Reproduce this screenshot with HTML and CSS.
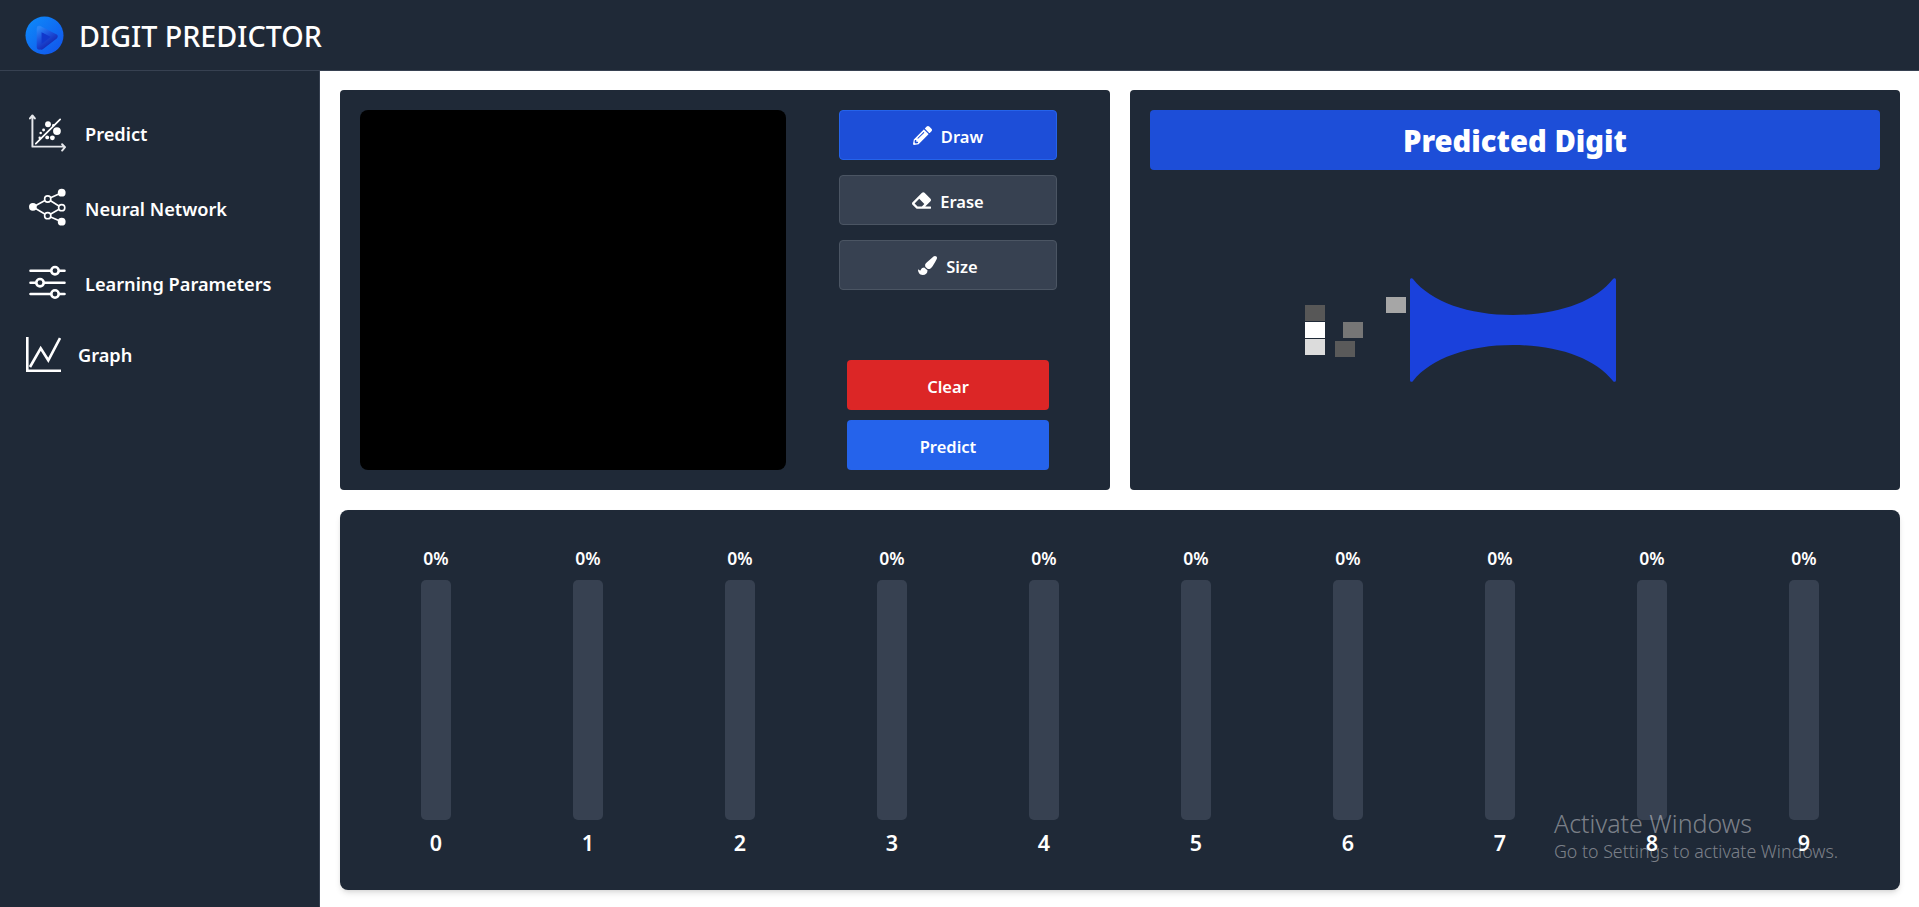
FILE: index.html
```html
<!DOCTYPE html>
<html lang="en">
<head>
<meta charset="utf-8">
<title>Digit Predictor</title>
<link rel="stylesheet" href="styles.css">
</head>
<body>
<header class="topbar">
  <svg class="logo" viewBox="0 0 40 40" aria-hidden="true">
    <defs>
      <linearGradient id="lg1" x1="0" y1="0" x2="1" y2="1"><stop offset="0" stop-color="#0d8dfb"/><stop offset="1" stop-color="#1251ea"/></linearGradient>
      <linearGradient id="lg2" x1="0" y1="0" x2="0.600" y2="1"><stop offset="0" stop-color="#2a86f8"/><stop offset="0.500" stop-color="#1c50dc"/><stop offset="1" stop-color="#1426b0"/></linearGradient>
    </defs>
    <circle cx="20" cy="20" r="19.500" fill="url(#lg1)"/>
    <path d="M14 15L17 31L29 21.500Z" fill="#1138cc"/>
    <path d="M14.500 32V12.500L31 21L17 32" fill="none" stroke="url(#lg2)" stroke-width="5" stroke-linejoin="round" stroke-linecap="round"/>
  </svg>
  <h1 class="brand">DIGIT PREDICTOR</h1>
</header>
<div class="shell">
  <nav class="sidebar">
    <a class="nav-item">
      <svg class="nav-icon" viewBox="0 0 38 40" fill="none" stroke="#e5e7eb" stroke-width="2" stroke-linecap="round" stroke-linejoin="round" aria-hidden="true">
        <path d="M3.500 34V4M1 5L3.500 2L6 5M3.500 34H36M34 31.500L37 34.500L34 38"/>
        <path d="M7 31L32 6" stroke="#fff" stroke-width="1.800"/>
        <g fill="#fff" stroke="none">
          <circle cx="28.700" cy="18" r="4"/><circle cx="19.500" cy="11" r="3"/><circle cx="24" cy="25" r="2.500"/><circle cx="18.700" cy="24.500" r="2"/><circle cx="12" cy="20" r="1.300"/><circle cx="15" cy="17" r="1.500"/><circle cx="11" cy="25" r="1.300"/><circle cx="25" cy="12" r="1.300"/>
        </g>
      </svg>
      <span>Predict</span>
    </a>
    <a class="nav-item">
      <svg class="nav-icon" viewBox="0 0 37 40" fill="none" stroke="#fff" stroke-width="1.600" aria-hidden="true">
        <path d="M4 19L18.700 11L32.700 4.700M4 19L18.700 27.700L32.700 33.700M18.700 11L32.700 19.700L18.700 27.700"/>
        <circle cx="3.900" cy="18.800" r="3.900" fill="#fff" stroke="none"/>
        <circle cx="32.700" cy="4.700" r="3.900" fill="#fff" stroke="none"/>
        <circle cx="32.700" cy="33.700" r="3.900" fill="#fff" stroke="none"/>
        <circle cx="18.700" cy="11" r="3.100" fill="#1f2937"/>
        <circle cx="18.700" cy="27.700" r="3.100" fill="#1f2937"/>
        <circle cx="32.700" cy="19.700" r="3.100" fill="#1f2937"/>
      </svg>
      <span>Neural Network</span>
    </a>
    <a class="nav-item">
      <svg class="nav-icon" viewBox="0 0 37 40" fill="none" stroke="#fff" stroke-width="2.600" stroke-linecap="round" aria-hidden="true">
        <path d="M1.500 7.700H35.500M1.500 19.700H35.500M1.500 31H35.500"/>
        <circle cx="26" cy="7.700" r="3.700" fill="#1f2937"/>
        <circle cx="11" cy="19.700" r="3.700" fill="#1f2937"/>
        <circle cx="26" cy="31" r="3.700" fill="#1f2937"/>
      </svg>
      <span>Learning Parameters</span>
    </a>
    <a class="nav-item nav-item-graph">
      <svg class="nav-icon-graph" viewBox="0 0 35 35" fill="none" stroke="#fff" stroke-width="2.600" aria-hidden="true">
        <path d="M1.300 0V33.700H35"/>
        <path d="M4 30L14.700 11.300L22.300 23.300L34 1"/>
      </svg>
      <span>Graph</span>
    </a>
  </nav>
  <main class="content">
    <div class="top-row">
      <section class="panel panel-draw">
        <div class="canvas"></div>
        <div class="controls">
          <div class="tools">
            <button class="btn tool tool-active">
              <svg class="btn-icon" viewBox="0 0 512 512" aria-hidden="true"><path d="M497.9 142.1l-46.1 46.1c-4.7 4.7-12.3 4.7-17 0l-111-111c-4.7-4.7-4.7-12.3 0-17l46.1-46.1c18.7-18.7 49.1-18.7 67.9 0l60.1 60.1c18.8 18.7 18.8 49.1 0 67.9zM284.2 99.8L21.6 362.4.4 483.9c-2.9 16.4 11.4 30.6 27.8 27.8l121.5-21.3 262.6-262.6c4.7-4.7 4.7-12.3 0-17l-111-111c-4.8-4.7-12.4-4.7-17.1 0zM124.1 339.9c-5.5-5.5-5.5-14.3 0-19.8l154-154c5.5-5.5 14.3-5.5 19.8 0s5.5 14.3 0 19.8l-154 154c-5.5 5.5-14.3 5.5-19.8 0zM88 424h48v36.3l-64.5 11.3-31.1-31.1L51.7 376H88v48z"/></svg>
              Draw
            </button>
            <button class="btn tool">
              <svg class="btn-icon" viewBox="0 0 512 512" aria-hidden="true"><path d="M497.941 273.941c18.745-18.745 18.745-49.137 0-67.882l-160-160c-18.745-18.745-49.136-18.746-67.883 0l-256 256c-18.745 18.745-18.745 49.137 0 67.882l96 96A48.004 48.004 0 0 0 144 480h356c6.627 0 12-5.373 12-12v-40c0-6.627-5.373-12-12-12H355.883l142.058-142.059zm-302.627-62.627l137.373 137.373L265.373 416H150.628l-80-80 124.686-124.686z"/></svg>
              Erase
            </button>
            <button class="btn tool">
              <svg class="btn-icon" viewBox="0 0 512 512" aria-hidden="true"><path d="M167.02 309.34c-40.12 2.58-76.53 17.86-97.19 72.3-2.35 6.21-8 9.98-14.59 9.98-11.11 0-45.46-27.67-55.25-34.35C0 439.62 37.93 512 128 512c75.86 0 128-43.77 128-120.19 0-3.11-.65-6.08-.97-9.13l-88.01-73.34zM457.89 0c-15.16 0-29.37 6.71-40.21 16.45C213.27 199.05 192 203.34 192 257.09c0 13.7 3.25 26.76 8.73 38.7l63.82 53.18c7.21 1.8 14.64 3.03 22.39 3.03 62.11 0 98.11-45.47 211.16-256.46 7.38-14.35 13.9-29.85 13.9-45.99C512 20.64 486 0 457.89 0z"/></svg>
              Size
            </button>
          </div>
          <div class="actions">
            <button class="btn action action-clear">Clear</button>
            <button class="btn action action-predict">Predict</button>
          </div>
        </div>
      </section>
      <section class="panel panel-result">
        <h2 class="result-title">Predicted Digit</h2>
        <div class="result-stage">
          <svg class="digit-art" viewBox="0 0 311 104" aria-hidden="true">
            <rect x="0" y="27" width="20" height="16" fill="#575757"/>
            <rect x="0" y="44" width="20" height="16" fill="#ffffff"/>
            <rect x="0" y="61" width="20" height="16" fill="#dcdcdc"/>
            <rect x="38" y="44" width="20" height="16" fill="#767676"/>
            <rect x="30" y="63" width="20" height="16" fill="#5a5a5a"/>
            <rect x="81" y="19" width="20" height="16" fill="#a6a6a6"/>
            <path d="M105 2C105 0 107 -.5 108 1C126 24 164 37 208 37C252 37 290 24 308 1C309 -.5 311 0 311 2V102C311 104 309 104.500 308 103C290 80 252 67 208 67C164 67 126 80 108 103C107 104.500 105 104 105 102Z" fill="#1a41dc"/>
          </svg>
        </div>
      </section>
    </div>
    <section class="panel panel-bars">
      <div class="bar-col"><span class="pct">0%</span><div class="track"></div><span class="digit">0</span></div>
      <div class="bar-col"><span class="pct">0%</span><div class="track"></div><span class="digit">1</span></div>
      <div class="bar-col"><span class="pct">0%</span><div class="track"></div><span class="digit">2</span></div>
      <div class="bar-col"><span class="pct">0%</span><div class="track"></div><span class="digit">3</span></div>
      <div class="bar-col"><span class="pct">0%</span><div class="track"></div><span class="digit">4</span></div>
      <div class="bar-col"><span class="pct">0%</span><div class="track"></div><span class="digit">5</span></div>
      <div class="bar-col"><span class="pct">0%</span><div class="track"></div><span class="digit">6</span></div>
      <div class="bar-col"><span class="pct">0%</span><div class="track"></div><span class="digit">7</span></div>
      <div class="bar-col"><span class="pct">0%</span><div class="track"></div><span class="digit">8</span></div>
      <div class="bar-col"><span class="pct">0%</span><div class="track"></div><span class="digit">9</span></div>
    </section>
  </main>
</div>
<aside class="activate">
  <div class="activate-title">Activate Windows</div>
  <div class="activate-sub">Go to Settings to activate Windows.</div>
</aside>
</body>
</html>
```

FILE: styles.css
```css
* { box-sizing: border-box; }
html, body { margin: 0; height: 100%; overflow: hidden; }
body {
  position: relative;
  background: #fff;
  color: #fff;
  font-family: "Noto Sans", "Open Sans", "Liberation Sans", sans-serif;
  display: flex;
  flex-direction: column;
}
.topbar {
  height: 71px;
  flex: none;
  display: flex;
  align-items: center;
  gap: 15px;
  padding-left: 25px;
  background: #1f2937;
  border-bottom: 1px solid #374151;
}
.logo { width: 39px; height: 39px; flex: none; }
.brand { margin: 0; padding-top: 2px; font-size: 28.700px; font-weight: 500; line-height: 1; }
.shell { flex: 1; display: flex; min-height: 0; }
.sidebar {
  width: 320px;
  flex: none;
  background: #1f2937;
  border-right: 1px solid #374151;
  padding: 42px 0 0 29px;
  display: flex;
  flex-direction: column;
  gap: 35px;
}
.nav-item {
  display: flex;
  align-items: center;
  gap: 19px;
  height: 40px;
  font-size: 18.200px;
  font-weight: 600;
}
.nav-item span { padding-top: 1px; }
.nav-icon { width: 37px; height: 40px; flex: none; }
.nav-item-graph { margin: -2px 0 0 -3px; height: 36px; gap: 17px; }
.nav-icon-graph { width: 35px; height: 35px; flex: none; }
.content {
  flex: 1;
  min-width: 0;
  padding: 19px 19px 17px 20px;
  display: flex;
  flex-direction: column;
  gap: 20px;
}
.top-row {
  display: grid;
  grid-template-columns: 1fr 1fr;
  gap: 20px;
  height: 400px;
  flex: none;
}
.panel { background: #1f2937; border-radius: 4px; }
.panel-draw { display: flex; padding: 20px; gap: 20px; }
.canvas { width: 426px; flex: none; background: #000; border-radius: 8px; }
.controls {
  flex: 1;
  display: flex;
  flex-direction: column;
  align-items: center;
  justify-content: space-between;
}
.tools { display: flex; flex-direction: column; gap: 15px; }
.actions { display: flex; flex-direction: column; gap: 10px; }
.btn {
  height: 50px;
  display: flex;
  align-items: center;
  justify-content: center;
  gap: 9px;
  border-radius: 4px;
  color: #fff;
  font: 600 16.500px "Noto Sans", "Open Sans", sans-serif;
  padding: 2px 0 0;
}
.tool { width: 218px; background: #374151; border: 1px solid #4b5563; }
.tool-active { background: #1d4ed8; border-color: #2563eb; }
.btn-icon { width: 19px; height: 19px; fill: #fff; flex: none; margin-top: -2px; }
.action { width: 202px; border: 0; }
.action-clear { background: #dc2626; }
.action-predict { background: #2563eb; }
.panel-result { padding: 20px; display: flex; flex-direction: column; }
.result-title {
  margin: 0;
  height: 60px;
  padding-top: 2px;
  flex: none;
  display: flex;
  align-items: center;
  justify-content: center;
  background: #1d4ed8;
  border-radius: 4px;
  font-size: 29.200px;
  font-weight: 900;
}
.result-stage { flex: 1; padding: 108px 0 0 155px; }
.digit-art { display: block; width: 311px; height: 104px; overflow: visible; }
.panel-bars {
  flex: none;
  height: 380px;
  border-radius: 8px;
  padding: 36px 20px 0;
  display: flex;
  box-shadow: 0 4px 6px -1px rgba(0,0,0,.12), 0 2px 4px -2px rgba(0,0,0,.1);
}
.bar-col { flex: 1; display: flex; flex-direction: column; align-items: center; }
.pct { height: 24px; line-height: 24px; font-size: 17.500px; font-weight: 600; margin-bottom: 10px; }
.track { width: 30px; height: 240px; background: #374151; border-radius: 5px; }
.digit { margin-top: 9px; height: 28px; line-height: 28px; font-size: 21.500px; font-weight: 600; }
.activate {
  position: absolute;
  left: 1554px;
  top: 808px;
  color: rgba(255,255,255,.42);
  pointer-events: none;
}
.activate-title { font-size: 25px; line-height: 30px; font-weight: 300; }
.activate-sub { font-size: 17.800px; line-height: 26px; font-weight: 300; }
```
